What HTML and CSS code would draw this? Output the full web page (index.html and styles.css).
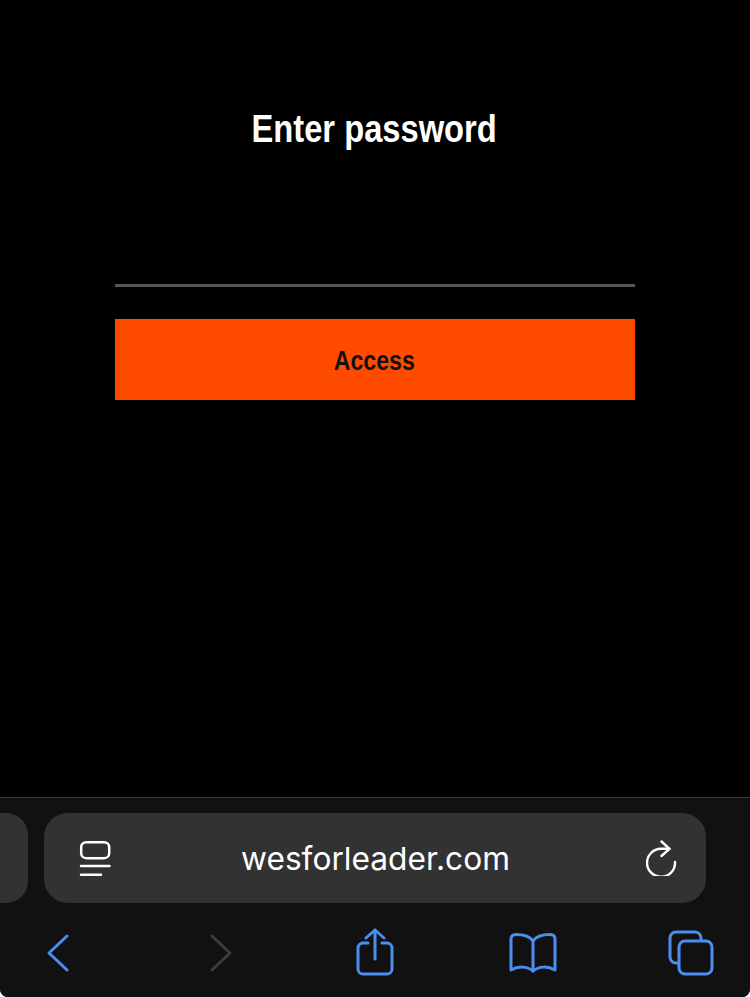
FILE: index.html
```html
<!DOCTYPE html>
<html lang="en">
  <head>
    <meta charset="UTF-8" />
    <meta name="viewport" content="width=device-width, initial-scale=1.0" />
    <title>Enter password</title>
    <link rel="stylesheet" href="styles.css">
  </head>
  <body>
    <div class="screen">
      <main class="content">
        <h1>Enter password</h1>
        <input class="password" type="password" />
        <button class="access"><span class="access-label">Access</span></button>
      </main>
      <footer class="toolbar">
        <div class="tabs">
          <div class="tab-edge"></div>
          <div class="url-bar">
            <svg class="icon" width="32" height="36" viewBox="0 0 32 36" fill="none" stroke="#fff" stroke-width="2.5" stroke-linecap="round">
              <rect x="2.200" y="2.200" width="28" height="16" rx="5" />
              <path d="M2 26H30.500" />
              <path d="M2 34.700H22" />
            </svg>
            <span class="url">wesforleader.com</span>
            <svg class="icon" width="32" height="36" viewBox="0 0 32 36" fill="none" stroke="#fff" stroke-width="2.400" stroke-linecap="round" stroke-linejoin="round">
              <path d="M23.500 8.800H15A14 14 0 1 0 29 22" />
              <path d="M15.500 1.500L23.500 8.800L15.500 16" />
            </svg>
          </div>
        </div>
        <nav class="nav">
          <svg class="nav-back" width="24" height="40" viewBox="0 0 24 40" fill="none" stroke="#4a8ff0" stroke-width="3" stroke-linecap="round" stroke-linejoin="round">
            <path d="M21 3L3 20L21 37" />
          </svg>
          <svg class="nav-forward" width="24" height="40" viewBox="0 0 24 40" fill="none" stroke="#3c3c3e" stroke-width="3" stroke-linecap="round" stroke-linejoin="round">
            <path d="M3 3L21 20L3 37" />
          </svg>
          <svg class="nav-share" width="40" height="48" viewBox="0 0 40 48" fill="none" stroke="#4a8ff0" stroke-width="3" stroke-linecap="round" stroke-linejoin="round">
            <path d="M13 15H8A5 5 0 0 0 3 20V41A5 5 0 0 0 8 46H32A5 5 0 0 0 37 41V20A5 5 0 0 0 32 15H27" />
            <path d="M20 31V2" />
            <path d="M11 10L20 2L29 10" />
          </svg>
          <svg class="nav-book" width="50" height="40" viewBox="0 0 50 40" fill="none" stroke="#4a8ff0" stroke-width="3" stroke-linecap="round" stroke-linejoin="round">
            <path d="M25 8C21 2 14 1.500 8 1.500C5 1.500 3 3 3 6V37C10 33 19 33 25 38C31 33 40 33 47 37V6C47 3 45 1.500 42 1.500C36 1.500 29 2 25 8Z" />
            <path d="M25 8V38" />
          </svg>
          <svg class="nav-tabs" width="46" height="46" viewBox="0 0 46 46" fill="none" stroke="#4a8ff0" stroke-width="3" stroke-linejoin="round">
            <path d="M11 33H8A6 6 0 0 1 2 27V8A6 6 0 0 1 8 2H27A6 6 0 0 1 33 8V11" />
            <rect x="11" y="11" width="33" height="33" rx="6" />
          </svg>
        </nav>
      </footer>
    </div>
  </body>
</html>
```

FILE: styles.css
```css
html,
body {
  margin: 0;
  height: 100%;
  background: white;
}
.screen {
  display: flex;
  flex-direction: column;
  height: 997px;
  background: black;
  border-radius: 0 0 8px 8px;
  overflow: hidden;
}
.content {
  flex: 1;
  display: flex;
  flex-direction: column;
  padding: 0 115px;
  font-family: "Liberation Sans", Arial, sans-serif;
}
/* no narrow font installed, so squeeze the bold sans */
h1 {
  margin: 106px 0 0;
  padding-right: 2px;
  height: 46px;
  line-height: 46px;
  font-size: 38px;
  font-weight: bold;
  text-align: center;
  color: white;
  transform: scaleX(0.86);
}
.password {
  height: 133px;
  padding: 0;
  background: none;
  border: none;
  border-bottom: 3px solid #555;
  outline: none;
  box-sizing: border-box;
  width: 100%;
  margin-top: 2px;
  margin-bottom: 32px;
}
.access {
  height: 81px;
  background: #ff4b00;
  color: #111;
  border: none;
  font-family: inherit;
  font-size: 27px;
  font-weight: bold;
  padding: 4px 2px 0 0;
}
.access-label {
  display: inline-block;
  transform: scaleX(0.855);
}
.toolbar {
  height: 200px;
  box-sizing: border-box;
  background: #111112;
  border-top: 1px solid #3a3a3c;
  padding-top: 15px;
}
.tabs {
  display: flex;
  gap: 16px;
  height: 90px;
  padding-right: 44px;
}
.tab-edge {
  width: 28px;
  background: #323233;
  border-radius: 0 22px 22px 0;
}
.url-bar {
  flex: 1;
  display: flex;
  align-items: center;
  justify-content: space-between;
  padding: 0 28px 0 35px;
  background: #323233;
  border-radius: 24px;
}
.url {
  margin-right: 6px;
  font-family: Inter, "Liberation Sans", sans-serif;
  font-size: 31.700px;
  color: white;
}
.nav {
  display: flex;
  align-items: center;
  box-sizing: border-box;
  height: 94px;
  padding: 6px 0 0 46px;
}
.nav-forward {
  margin-left: 139px;
}
.nav-share {
  margin-left: 122px;
  margin-top: -2px;
}
.nav-book {
  margin-left: 113px;
}
.nav-tabs {
  margin-left: 110px;
}
```
